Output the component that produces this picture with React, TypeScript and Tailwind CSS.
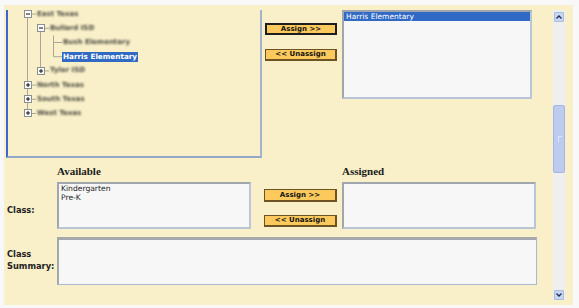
import React from "react";

function Box({ plus }: { plus?: boolean }) {
  return (
    <svg width="8" height="8" viewBox="0 0 8 8" className="shrink-0">
      <rect x="0.5" y="0.5" width="7" height="7" fill="#fbfbfb" stroke="#8a9090" />
      <line x1="2" y1="4" x2="6" y2="4" stroke="#111" />
      {plus && <line x1="4" y1="2" x2="4" y2="6" stroke="#111" />}
    </svg>
  );
}

function Row({
  level,
  box,
  children,
}: {
  level: 1 | 2 | 3;
  box?: "plus" | "minus";
  children: React.ReactNode;
}) {
  const pl = level === 1 ? "pl-[16px]" : level === 2 ? "pl-[29px]" : "pl-[42px]";
  return (
    <div className={`flex items-center h-[14.2px] ${pl}`}>
      {box ? <Box plus={box === "plus"} /> : <span className="w-[8px] shrink-0" />}
      <span className="ml-[5px] flex items-center">{children}</span>
    </div>
  );
}

function Blur({ children }: { children: React.ReactNode }) {
  return (
    <span className="text-[#4a4940] blur-[1.2px] font-bold text-[7px] leading-none whitespace-nowrap">
      {children}
    </span>
  );
}

function Chevron({ up }: { up?: boolean }) {
  return (
    <svg width="6" height="4" viewBox="0 0 6 4">
      {up ? (
        <polyline points="0.5,3.5 3,1 5.5,3.5" fill="none" stroke="#1d2b55" strokeWidth="1.3" />
      ) : (
        <polyline points="0.5,0.5 3,3 5.5,0.5" fill="none" stroke="#1d2b55" strokeWidth="1.3" />
      )}
    </svg>
  );
}

export default function App() {
  return (
    <div className="w-[579px] h-[308px] bg-[#f8f8f8] pt-[5px] pl-[4px] pr-[6px] pb-[3px] font-['DejaVu_Sans',Verdana,sans-serif] overflow-hidden">
      <div className="h-[300px] bg-[#f9f0c9] flex">
        <div className="flex-1 flex flex-col">
          {/* top section */}
          <div className="flex mt-[5px] pl-[2px]">
            <div className="relative w-[256px] h-[148px] border-l-2 border-r-2 border-b-2 border-l-[#3a68cc] border-r-[#a3b3cb] border-b-[#93a8c8] overflow-hidden">
              <svg
                className="absolute left-0 top-0"
                width="252"
                height="146"
                viewBox="0 0 252 146"
              >
                <g stroke="#aaa796" strokeWidth="1" fill="none">
                  <line x1="19.5" y1="7.6" x2="19.5" y2="100" />
                  <line x1="24" y1="4.1" x2="28" y2="4.1" />
                  <line x1="24" y1="75.1" x2="28" y2="75.1" />
                  <line x1="24" y1="89.3" x2="28" y2="89.3" />
                  <line x1="24" y1="103.5" x2="28" y2="103.5" />
                  <line x1="32.5" y1="21.8" x2="32.5" y2="57.4" />
                  <line x1="37" y1="18.3" x2="41" y2="18.3" />
                  <line x1="37" y1="60.9" x2="41" y2="60.9" />
                  <line x1="45.5" y1="25.4" x2="45.5" y2="46.7" />
                  <line x1="45.5" y1="32.5" x2="54" y2="32.5" />
                  <line x1="45.5" y1="46.7" x2="54" y2="46.7" />
                </g>
              </svg>
              <div className="relative mt-[-3px]">
                <Row level={1} box="minus">
                  <Blur>East Texas</Blur>
                </Row>
                <Row level={2} box="minus">
                  <Blur>Bullard ISD</Blur>
                </Row>
                <Row level={3}>
                  <Blur>Bush Elementary</Blur>
                </Row>
                <Row level={3}>
                  <span className="bg-[#316ac5] text-white font-bold text-[7.25px] leading-[10px] h-[10px] px-[1px] ml-[-1px] whitespace-nowrap">
                    Harris Elementary
                  </span>
                </Row>
                <Row level={2} box="plus">
                  <Blur>Tyler ISD</Blur>
                </Row>
                <Row level={1} box="plus">
                  <Blur>North Texas</Blur>
                </Row>
                <Row level={1} box="plus">
                  <Blur>South Texas</Blur>
                </Row>
                <Row level={1} box="plus">
                  <Blur>West Texas</Blur>
                </Row>
              </div>
            </div>

            <div className="ml-[3px] w-[72px] pt-[13px] flex flex-col gap-[14px]">
              <button className="w-[72px] h-[12px] bg-[#fcc95d] border-2 border-[#1e1e1e] text-[7px] font-bold leading-none text-[#111] flex items-center justify-center">
                Assign &gt;&gt;
              </button>
              <button className="w-[72px] h-[12px] bg-[#fcc95d] border border-r-2 border-b-2 border-[#6b5324] text-[7px] font-bold leading-none text-[#111] flex items-center justify-center">
                &lt;&lt; Unassign
              </button>
            </div>

            <div className="ml-[5px] w-[190px] h-[89px] bg-[#f7f7f7] border-2 border-t-[#a0a6ae] border-l-[#a0a6ae] border-r-[#b9c6d8] border-b-[#b9c6d8]">
              <div className="bg-[#316ac5] text-white text-[7.5px] leading-[9px] h-[9px] pl-[2px] whitespace-nowrap">
                Harris Elementary
              </div>
            </div>
          </div>

          {/* headings */}
          <div className="flex mt-[8px] font-['Liberation_Serif',serif] font-bold text-[11px] leading-[11px] text-[#1a1a1a]">
            <div className="w-[53px]" />
            <div className="w-[285px]">Available</div>
            <div>Assigned</div>
          </div>

          {/* class row */}
          <div className="flex mt-[5px]">
            <div className="w-[53px] pl-[3px] pt-[22px] text-[8.25px] leading-[12px] font-bold text-[#222]">
              Class:
            </div>
            <div className="w-[194px] h-[47px] bg-[#f7f7f7] border-2 border-t-[#a0a6ae] border-l-[#a0a6ae] border-r-[#b9c6d8] border-b-[#b9c6d8] pt-[1px] pl-[2px] text-[7.6px] leading-[8.5px] text-[#222]">
              <div>Kindergarten</div>
              <div>Pre-K</div>
            </div>
            <div className="ml-[13px] w-[73px] pt-[7px] flex flex-col gap-[13px]">
              <button className="w-[73px] h-[13px] bg-[#fcc95d] border border-r-2 border-b-2 border-[#6b5324] text-[7px] font-bold leading-none text-[#111] flex items-center justify-center">
                Assign &gt;&gt;
              </button>
              <button className="w-[73px] h-[12px] bg-[#fcc95d] border border-r-2 border-b-2 border-[#6b5324] text-[7px] font-bold leading-none text-[#111] flex items-center justify-center">
                &lt;&lt; Unassign
              </button>
            </div>
            <div className="ml-[5px] w-[194px] h-[47px] bg-[#f7f7f7] border-2 border-t-[#a0a6ae] border-l-[#a0a6ae] border-r-[#b9c6d8] border-b-[#b9c6d8]" />
          </div>

          {/* summary row */}
          <div className="flex mt-[8px]">
            <div className="w-[53px] pl-[3px] pt-[12px] text-[8.25px] leading-[11.5px] font-bold text-[#222]">
              <div>Class</div>
              <div>Summary:</div>
            </div>
            <div className="w-[480px] h-[48px] bg-[#f7f7f7] border-t-[3px] border-l-2 border-r border-b border-t-[#a5a8ac] border-l-[#a5a8ac] border-r-[#a7b8cf] border-b-[#a7b8cf]" />
          </div>
        </div>

        {/* scrollbar */}
        <div className="w-[12px] mr-[8px] my-[5px] bg-[#efefef] flex flex-col items-center">
          <div className="mt-[2px] w-[10px] h-[10px] bg-[#c9d7f1] border border-[#a9bce3] rounded-[1px] flex items-center justify-center">
            <Chevron up />
          </div>
          <div className="mt-[83px] w-[12px] h-[68px] bg-[#bccbef] border border-[#a3b7e3] rounded-[2px] flex items-center justify-center">
            <div className="w-[4px] h-[6px] border-l border-t border-[#dde6f8] ml-[1px]" />
          </div>
          <div className="flex-1" />
          <div className="w-[10px] h-[10px] bg-[#c9d7f1] border border-[#a9bce3] rounded-[1px] flex items-center justify-center">
            <Chevron />
          </div>
        </div>
      </div>
    </div>
  );
}
